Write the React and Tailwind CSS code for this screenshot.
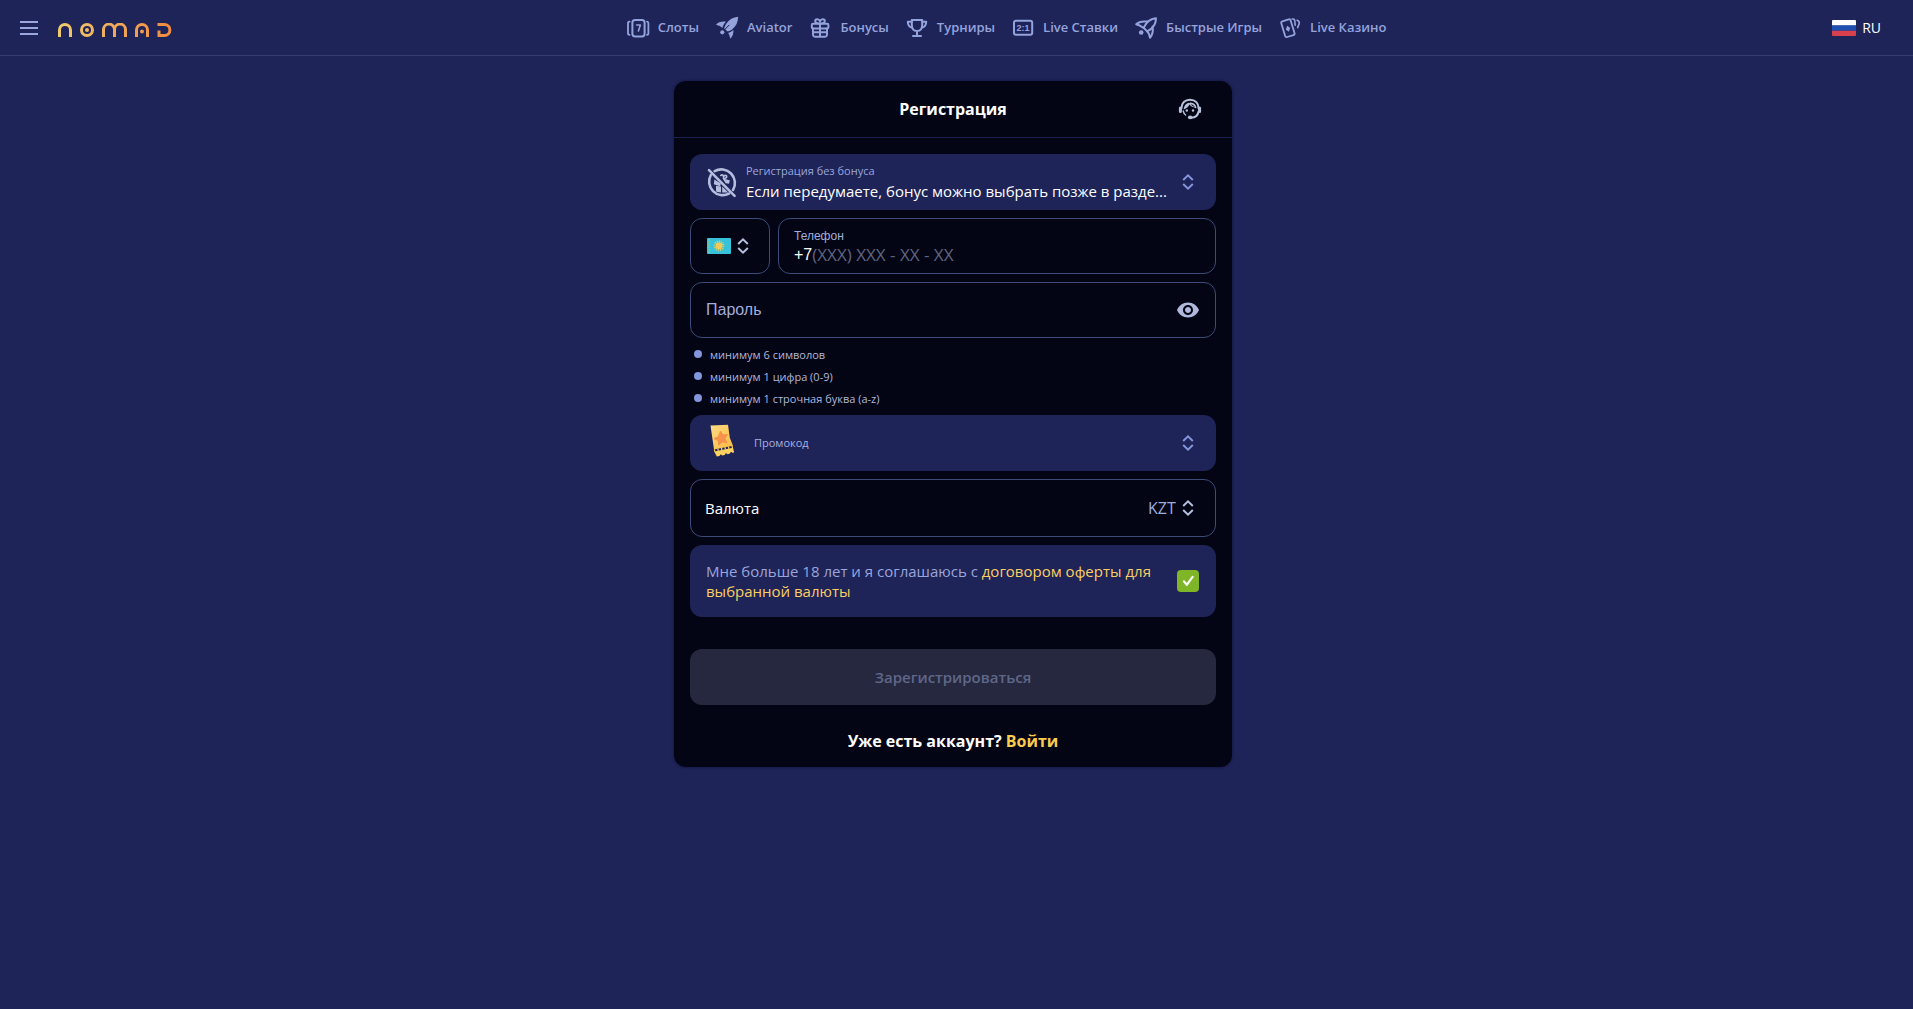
import { MdVisibility } from "react-icons/md";

function NavIcon({ children }) {
  return (
    <svg
      viewBox="0 0 24 24"
      className="h-6 w-6 shrink-0"
      fill="none"
      stroke="currentColor"
      strokeWidth="2"
      strokeLinecap="round"
      strokeLinejoin="round"
      aria-hidden="true"
    >
      {children}
    </svg>
  );
}

const NAV = [
  {
    label: "Слоты",
    icon: (
      <NavIcon>
        <rect x="6.400" y="4" width="12.200" height="16.400" rx="2.600" />
        <path d="M3.600 5.600Q2 5.600 2 7.200V17.200Q2 18.800 3.600 18.800M21 5.600Q22.400 5.600 22.400 7.200V17.200Q22.400 18.800 21 18.800" strokeWidth="1.800" />
        <path d="M10.600 9h3.800l-2 6" strokeWidth="1.600" />
      </NavIcon>
    ),
  },
  {
    label: "Aviator",
    icon: (
      <NavIcon>
        <path
          d="M23.200.8C18 1.200 14 3.600 11.200 7.800c-1 1.500-1.700 3-2 4.600l3.400 3.200c1.700-.4 3.300-1.200 4.700-2.300C21 10.300 23 6.300 23.200.8Z"
          fill="currentColor"
          stroke="none"
        />
        <path
          d="M1 8.800c1.800-2.200 4.400-3.300 8-3.300h2C9.200 7.500 8 9.600 7.400 12L4.800 9.900ZM18.400 14c.3 3.400-.7 6.300-3 8.700l-1.300-4.300-1-1.500c2-.6 3.800-1.600 5.300-2.900Z"
          fill="currentColor"
          stroke="none"
        />
        <path d="m8 15.200 6-6" stroke="#1e2358" strokeWidth="1" />
        <circle cx="7.300" cy="16.300" r="2.100" fill="currentColor" stroke="none" />
      </NavIcon>
    ),
  },
  {
    label: "Бонусы",
    icon: (
      <NavIcon>
        <rect x="3.800" y="7.800" width="16.600" height="4.600" rx="1.200" />
        <path d="M5 12.400V18.600a2.200 2.200 0 0 0 2.200 2.200h9.600A2.200 2.200 0 0 0 19 18.600V12.400M12 7.800v13M5 16.200h14" />
        <path d="M12 7.400C9 7.400 7.200 6.600 7.200 4.900S10.800 2.200 12 5.400c1.200-3.200 4.800-2.200 4.800-.5S15 7.400 12 7.400Z" />
      </NavIcon>
    ),
  },
  {
    label: "Турниры",
    icon: (
      <NavIcon>
        <path d="M6.800 4h10.400v4.400c0 4-1.900 6.500-5.200 6.500s-5.200-2.500-5.200-6.500ZM12 15v5M8 20h8" />
        <path d="M6.800 5.800H2.800c0 3.200 1.400 5.200 4.200 5.600M17.200 5.800h4c0 3.200-1.400 5.200-4.200 5.600" />
      </NavIcon>
    ),
  },
  {
    label: "Live Ставки",
    icon: (
      <NavIcon>
        <rect x="3" y="4.800" width="18.200" height="14" rx="2" />
        <text
          x="12.100"
          y="15"
          fontSize="9"
          fontWeight="700"
          textAnchor="middle"
          fill="currentColor"
          stroke="none"
          fontFamily="Liberation Sans, sans-serif"
        >
          2:1
        </text>
      </NavIcon>
    ),
  },
  {
    label: "Быстрые Игры",
    icon: (
      <NavIcon>
        <path d="M22 2.200C16.500 2.400 12.500 5.600 9.600 11.800l3.600 3.600C19 12.500 22 8 22 2.200Z" />
        <path d="M13.400 5.600C8.600 5 4.600 5.800 2.200 8.300l4 1.500 3.400 2M18.600 10.600c.8 4.400-.2 8.200-2.600 11.200l-1.200-4.200-1.600-2.200" />
        <circle cx="7.200" cy="16.500" r="2.300" fill="currentColor" stroke="none" />
      </NavIcon>
    ),
  },
  {
    label: "Live Казино",
    icon: (
      <NavIcon>
        <rect x="5" y="4" width="9.800" height="16.400" rx="1.600" transform="rotate(-17 9.900 12.200)" strokeWidth="1.800" />
        <path d="m9.200 9.800 3 2.300-1.400 3.600-3-2.300Z" fill="currentColor" stroke="none" />
        <path d="M14.200 3q2.200-.4 2.600 1.800l.4 4.400M19.200 4.200q2.600 1 2 3.400l-1.600 4" strokeWidth="1.600" />
      </NavIcon>
    ),
  },
];

function Logo() {
  return (
    <svg viewBox="0 0 114 14" className="h-[14px] w-[114px]" role="img" aria-label="Nomad" fill="none" strokeWidth="3">
      <defs>
        <linearGradient id="logo" gradientUnits="userSpaceOnUse" x1="0" y1="0" x2="114" y2="0">
          <stop offset="0" stopColor="#efcb6c" />
          <stop offset="0.500" stopColor="#f0a95a" />
          <stop offset="1" stopColor="#f28a3e" />
        </linearGradient>
      </defs>
      <g stroke="url(#logo)">
        <path d="M1.500 14V7a5.500 5.500 0 0 1 11 0v7" />
        <circle cx="29" cy="7" r="5.500" />
        <path d="M45.500 14V6.600a5.100 5.100 0 0 1 11 0V14M56.500 6.600a5.100 5.100 0 0 1 11 0V14" />
        <path d="M78.500 14V7a5.500 5.500 0 0 1 11 0v7" />
        <path d="M99.500 1.500h6.900a5.500 5.500 0 0 1 0 11h-5.400V7.500" />
      </g>
      <g fill="url(#logo)">
        <circle cx="29" cy="7" r="2" />
        <circle cx="84" cy="8.500" r="2" />
      </g>
    </svg>
  );
}

function SupportIcon() {
  return (
    <svg
      viewBox="0 0 24 24"
      className="h-6 w-6"
      fill="none"
      stroke="currentColor"
      strokeWidth="2"
      strokeLinecap="round"
      aria-hidden="true"
    >
      <path d="M3.400 11.500C3.400 6 7 2.800 12 2.800s8.600 3.200 8.600 8.700M20.600 14.500c-.6 3.800-3.200 6-7.400 6.300" />
      <path d="M2.400 11v3.600M21.600 11v3.600" strokeWidth="3" />
      <path d="M5.600 12.400c.4-3.400 2.200-5.800 4.800-6.600l1.800.4c1.200 2.400 3.200 3.800 6.200 4.400-2.800.4-5.400-.8-6.900-3-1 2.200-3 4-5.900 4.800Z" fill="currentColor" stroke="none" />
      <path d="M17.600 10.400c-.6-2.200-2.600-3.800-5.200-4" strokeWidth="1.600" />
      <path d="M5.200 14c.4 1.800 1.200 3.200 2.400 4" strokeWidth="1.400" />
      <ellipse cx="12.200" cy="20.400" rx="2.300" ry="1.800" fill="currentColor" stroke="none" />
      <circle cx="8.800" cy="13.500" r="1.200" fill="currentColor" stroke="none" />
      <circle cx="15" cy="13.500" r="1.200" fill="currentColor" stroke="none" />
    </svg>
  );
}

function Chevrons() {
  return (
    <svg
      viewBox="0 0 12 16"
      className="h-4 w-3 shrink-0"
      fill="none"
      stroke="currentColor"
      strokeWidth="2"
      aria-hidden="true"
    >
      <path d="m1.200 6 4.800-4.600L10.800 6M1.200 10l4.800 4.600L10.800 10" />
    </svg>
  );
}

function RussianFlag() {
  return (
    <svg viewBox="0 0 24 16" className="h-4 w-6" aria-hidden="true">
      <path d="M1 0h22a1 1 0 0 1 1 1v4.500H0V1a1 1 0 0 1 1-1Z" fill="#fff" />
      <path d="M0 5.400h24v5.300H0Z" fill="#1f4fb0" />
      <path d="M0 10.700h24V15a1 1 0 0 1-1 1H1a1 1 0 0 1-1-1Z" fill="#d8404c" />
    </svg>
  );
}

function KazakhFlag() {
  return (
    <svg viewBox="0 0 24 16" className="h-4 w-6" aria-hidden="true">
      <rect width="24" height="16" rx="1" fill="#36c2da" />
      <path d="M2 1v14" stroke="#8ccb8e" strokeWidth="1.600" strokeDasharray="1.500 1" />
      <circle cx="12" cy="7.800" r="4.300" fill="none" stroke="#c9cd72" strokeWidth="2.200" strokeDasharray="1.200 1" />
      <circle cx="12" cy="7.800" r="3.400" fill="#f3c95a" />
    </svg>
  );
}

function NoBonusIcon() {
  return (
    <svg viewBox="0 0 32 32" className="h-8 w-8 shrink-0" fill="none" stroke="#b4bddd" strokeLinecap="round" aria-hidden="true">
      <path d="M8.600 5.200A13.600 13.600 0 0 1 27 24M23 27.600A13.600 13.600 0 0 1 4.800 9" strokeWidth="2.600" />
      <path d="M3 4.200 28.600 29.800" strokeWidth="2.600" />
      <path d="M14.800 9.400c1.400-1.200 2.600-.2 2.700 1.400 1-1.800 3-1.800 3.200-.4.200 1.200-1 2-2.700 2.200" strokeWidth="1.600" />
      <path d="M16.600 12.600l7.200 1.600-.7 3.600-3.400-.6ZM8.400 13.600l6.400 3.800-.6 2.800-6.400-2Z" fill="#b4bddd" stroke="none" />
      <path d="M10 19.800l5 .8v5.800l-3.600-.4c-1 0-1.400-.6-1.400-1.400ZM16.200 20.600l6 5.800h-6Z" fill="#b4bddd" stroke="none" />
    </svg>
  );
}

function PromoIcon() {
  return (
    <svg viewBox="0 0 32 36" className="h-9 w-8 shrink-0" aria-hidden="true">
      <defs>
        <linearGradient id="ticket" x1="0" y1="0" x2="1" y2="1">
          <stop offset="0" stopColor="#ffdd84" />
          <stop offset="1" stopColor="#f9b83f" />
        </linearGradient>
      </defs>
      <path d="M4.500 2.500 22 1.700l1.800 13L27 22.800 8 26.400Z" fill="url(#ticket)" />
      <path
        d="m8.200 28.600 18.800-3.800 1.200 4.600-1.800.4-1.400-1-1.400 2-2.200.4-1.400-1.200-1.400 2-2.400.4-1.400-1.200-1.400 1.900-2.600.5Z"
        fill="#ffd25f"
      />
      <path d="m8 27.600 19.200-3.900" stroke="#ffd25f" strokeWidth="2.400" strokeDasharray="1.200 2.400" />
      <path
        d="m14.500 8 2.400 3.900 4.600-.4-2.600 3.900 2.200 4.300-4.900-.6-3.400 3-.7-4.600L8 15.600l4.500-2Z"
        fill="#f5934a"
        stroke="#f5934a"
        strokeLinejoin="round"
      />
    </svg>
  );
}

const RULES = ["минимум 6 символов", "минимум 1 цифра (0-9)", "минимум 1 строчная буква (a-z)"];

function Header() {
  return (
    <header className="flex h-14 items-center border-b border-[#363b6b] pl-5 pr-8">
      <button type="button" aria-label="Меню" className="text-[#9aa6de]">
        <svg viewBox="0 0 18 14" className="h-[14px] w-[18px]" stroke="currentColor" strokeWidth="2" aria-hidden="true">
          <path d="M0 1h18M0 7h18M0 13h18" />
        </svg>
      </button>
      <a href="#home" className="ml-5 pt-1">
        <Logo />
      </a>
      <nav className="flex flex-1 justify-center gap-4 pl-2">
        {NAV.map((item) => (
          <a
            key={item.label}
            href="#section"
            className="flex items-center gap-2 whitespace-nowrap text-[13px] font-semibold text-[#95a3dc]"
          >
            {item.icon}
            {item.label}
          </a>
        ))}
      </nav>
      <button type="button" className="flex items-center gap-[6px] text-sm text-white">
        <RussianFlag />
        RU
      </button>
    </header>
  );
}

export default function App() {
  return (
    <div className="min-h-screen bg-[#1e2358] font-['Open_Sans',sans-serif] text-[15px] text-white">
      <Header />
      <main className="flex justify-center px-4 py-[25px] pr-[23px]">
        <form className="w-full max-w-[558px] rounded-xl bg-[#030514] shadow-[0_0_3px_#0305147f]" onSubmit={(e) => e.preventDefault()}>
          <div className="grid h-[57px] grid-cols-[1fr_auto_1fr] items-center border-b border-[#1b2050] px-[30px]">
            <h1 className="col-start-2 text-base font-bold">Регистрация</h1>
            <button type="button" aria-label="Поддержка" className="justify-self-end text-[#b9c2dc]">
              <SupportIcon />
            </button>
          </div>

          <div className="flex flex-col gap-2 px-4 pb-[14px] pt-4">
            <button type="button" className="flex h-14 items-center rounded-xl bg-[#1e2358] pl-4 pr-[22px] text-left">
              <NoBonusIcon />
              <span className="ml-2 flex-1 whitespace-nowrap pt-[2px]">
                <span className="block text-[11px] leading-4 text-[#9ba7dc]">Регистрация без бонуса</span>
                <span className="block leading-6">Если передумаете, бонус можно выбрать позже в разде...</span>
              </span>
              <span className="text-[#8494dd]">
                <Chevrons />
              </span>
            </button>

            <div className="flex gap-2">
              <button
                type="button"
                aria-label="Код страны: Казахстан"
                className="flex h-14 w-20 items-center justify-center gap-[6px] rounded-xl border border-[#3c4b7a] pr-1 text-[#b5bfe0]"
              >
                <KazakhFlag />
                <Chevrons />
              </button>
              <div className="flex h-14 min-w-0 flex-1 flex-col justify-center rounded-xl border border-[#3c4b7a] px-[15px] pt-[2px]">
                <label htmlFor="phone" className="font-['Liberation_Sans',sans-serif] text-xs leading-4 text-[#a3addb]">
                  Телефон
                </label>
                <div className="flex items-center">
                  <span className="font-['Liberation_Sans',sans-serif] text-base leading-5">+7</span>
                  <input
                    id="phone"
                    type="tel"
                    placeholder="(XXX) XXX - XX - XX"
                    className="h-[22px] min-w-0 flex-1 bg-transparent text-[17px] outline-none placeholder:text-[#5f6480]"
                  />
                </div>
              </div>
            </div>

            <div className="flex h-14 items-center rounded-xl border border-[#3c4b7a] px-[15px]">
              <input
                type="password"
                aria-label="Пароль"
                placeholder="Пароль"
                className="min-w-0 flex-1 bg-transparent font-['Liberation_Sans',sans-serif] text-base outline-none placeholder:text-[#a3addb]"
              />
              <button type="button" aria-label="Показать пароль" className="text-[#b0b9dc]">
                <MdVisibility size={24} />
              </button>
            </div>

            <ul className="flex flex-col gap-[6px] pl-1 pt-[1px]">
              {RULES.map((rule) => (
                <li key={rule} className="flex items-start gap-2 text-[11px] leading-4 text-[#b0b8dd]">
                  <span className="mt-[3px] h-2 w-2 rounded-full bg-[#8295dd]" />
                  {rule}
                </li>
              ))}
            </ul>

            <button type="button" className="flex h-14 items-center rounded-xl bg-[#1e2358] pl-4 pr-[22px]">
              <span className="pb-1">
                <PromoIcon />
              </span>
              <span className="ml-4 flex-1 text-left text-[11px] text-[#a8b2e0]">Промокод</span>
              <span className="text-[#8494dd]">
                <Chevrons />
              </span>
            </button>

            <div className="flex h-[58px] items-center rounded-xl border border-[#3c4b7a] pl-[14px] pr-[21px] text-[#b5bfe0]">
              <label htmlFor="currency" className="flex-1 text-white">
                Валюта
              </label>
              <select id="currency" className="mr-[6px] appearance-none bg-transparent text-base text-[#9fabdc] outline-none">
                <option>KZT</option>
              </select>
              <Chevrons />
            </div>

            <div className="flex min-h-[72px] items-center gap-3 rounded-xl bg-[#1e2358] pl-4 pr-[17px]">
              <label htmlFor="agree" className="flex-1 leading-5 text-[#9aa5dc]">
                Мне больше 18 лет и я соглашаюсь с{" "}
                <a href="#offer" className="text-[#fbcf63]">
                  договором оферты для выбранной валюты
                </a>
              </label>
              <span className="relative h-[22px] w-[22px]">
                <input id="agree" type="checkbox" defaultChecked className="block h-full w-full appearance-none rounded bg-[#7fb627]" />
                <svg
                  viewBox="0 0 22 22"
                  className="pointer-events-none absolute inset-0"
                  fill="none"
                  stroke="#fff"
                  strokeWidth="2.200"
                  strokeLinecap="round"
                  strokeLinejoin="round"
                  aria-hidden="true"
                >
                  <path d="m7 11.400 2.800 3.400 5.800-8" />
                </svg>
              </span>
            </div>

            <button type="submit" disabled className="mt-6 h-14 rounded-xl bg-[#26283f] font-semibold text-[#5f6788]">
              Зарегистрироваться
            </button>

            <p className="mt-4 text-center text-base font-bold leading-6">
              Уже есть аккаунт?{" "}
              <a href="#login" className="text-[#fbcb4b]">
                Войти
              </a>
            </p>
          </div>
        </form>
      </main>
    </div>
  );
}
